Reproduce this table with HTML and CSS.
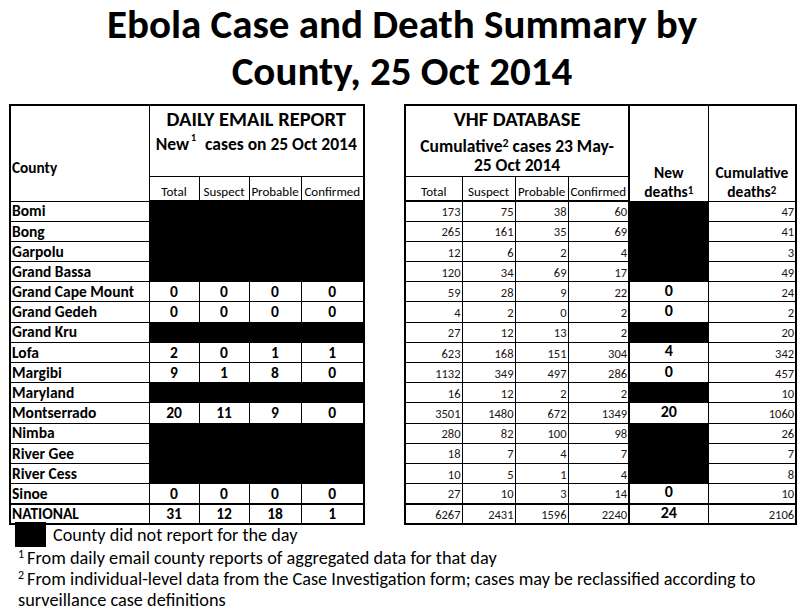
FILE: index.html
```html
<!DOCTYPE html>
<html>
<head>
<meta charset="utf-8">
<link rel="stylesheet" href="styles.css">
</head>
<body>
<h1 class="title">Ebola Case and Death Summary by<br>County, 25 Oct 2014</h1>
<div class="tables">
  <table class="daily">
    <colgroup><col class="c-county"><col class="c-a"><col class="c-b"><col class="c-c"><col class="c-d"></colgroup>
    <thead>
      <tr class="h1">
        <th rowspan="2" class="county-h">County</th>
        <th colspan="4" class="group"><div class="big">DAILY EMAIL REPORT</div><div class="sub">New<sup class="s1">1</sup> cases on 25 Oct 2014</div></th>
      </tr>
      <tr class="h2">
        <th class="sh">Total</th><th class="sh">Suspect</th><th class="sh">Probable</th><th class="sh">Confirmed</th>
      </tr>
    </thead>
    <tbody>
      <tr><td class="name">Bomi</td><td colspan="4" class="nr"></td></tr>
      <tr><td class="name">Bong</td><td colspan="4" class="nr"></td></tr>
      <tr><td class="name">Garpolu</td><td colspan="4" class="nr"></td></tr>
      <tr><td class="name">Grand Bassa</td><td colspan="4" class="nr"></td></tr>
      <tr><td class="name">Grand Cape Mount</td><td class="v">0</td><td class="v">0</td><td class="v">0</td><td class="v">0</td></tr>
      <tr><td class="name">Grand Gedeh</td><td class="v">0</td><td class="v">0</td><td class="v">0</td><td class="v">0</td></tr>
      <tr><td class="name">Grand Kru</td><td colspan="4" class="nr"></td></tr>
      <tr><td class="name">Lofa</td><td class="v">2</td><td class="v">0</td><td class="v">1</td><td class="v">1</td></tr>
      <tr><td class="name">Margibi</td><td class="v">9</td><td class="v">1</td><td class="v">8</td><td class="v">0</td></tr>
      <tr><td class="name">Maryland</td><td colspan="4" class="nr"></td></tr>
      <tr><td class="name">Montserrado</td><td class="v">20</td><td class="v">11</td><td class="v">9</td><td class="v">0</td></tr>
      <tr><td class="name">Nimba</td><td colspan="4" class="nr"></td></tr>
      <tr><td class="name">River Gee</td><td colspan="4" class="nr"></td></tr>
      <tr><td class="name">River Cess</td><td colspan="4" class="nr"></td></tr>
      <tr><td class="name">Sinoe</td><td class="v">0</td><td class="v">0</td><td class="v">0</td><td class="v">0</td></tr>
      <tr class="nat"><td class="name">NATIONAL</td><td class="v">31</td><td class="v">12</td><td class="v">18</td><td class="v">1</td></tr>
    </tbody>
  </table>

  <table class="vhf">
    <colgroup><col class="r-a"><col class="r-b"><col class="r-c"><col class="r-d"><col class="r-e"><col class="r-f"></colgroup>
    <thead>
      <tr class="h1">
        <th colspan="4" class="group"><div class="big">VHF DATABASE</div><div class="sub sub-r"><div>Cumulative<sup class="s2">2</sup> cases 23 May-</div><div>25 Oct 2014</div></div></th>
        <th rowspan="2" class="dh nd"><div>New</div><div>deaths<sup class="s3">1</sup></div></th>
        <th rowspan="2" class="dh"><div>Cumulative</div><div>deaths<sup class="s3">2</sup></div></th>
      </tr>
      <tr class="h2">
        <th class="sh">Total</th><th class="sh">Suspect</th><th class="sh">Probable</th><th class="sh">Confirmed</th>
      </tr>
    </thead>
    <tbody>
      <tr><td>173</td><td>75</td><td>38</td><td>60</td><td class="nd nr"></td><td>47</td></tr>
      <tr><td>265</td><td>161</td><td>35</td><td>69</td><td class="nd nr"></td><td>41</td></tr>
      <tr><td>12</td><td>6</td><td>2</td><td>4</td><td class="nd nr"></td><td>3</td></tr>
      <tr><td>120</td><td>34</td><td>69</td><td>17</td><td class="nd nr"></td><td>49</td></tr>
      <tr><td>59</td><td>28</td><td>9</td><td>22</td><td class="nd dv">0</td><td>24</td></tr>
      <tr><td>4</td><td>2</td><td>0</td><td>2</td><td class="nd dv">0</td><td>2</td></tr>
      <tr><td>27</td><td>12</td><td>13</td><td>2</td><td class="nd nr"></td><td>20</td></tr>
      <tr><td>623</td><td>168</td><td>151</td><td>304</td><td class="nd dv">4</td><td>342</td></tr>
      <tr><td>1132</td><td>349</td><td>497</td><td>286</td><td class="nd dv">0</td><td>457</td></tr>
      <tr><td>16</td><td>12</td><td>2</td><td>2</td><td class="nd nr"></td><td>10</td></tr>
      <tr><td>3501</td><td>1480</td><td>672</td><td>1349</td><td class="nd dv">20</td><td>1060</td></tr>
      <tr><td>280</td><td>82</td><td>100</td><td>98</td><td class="nd nr"></td><td>26</td></tr>
      <tr><td>18</td><td>7</td><td>4</td><td>7</td><td class="nd nr"></td><td>7</td></tr>
      <tr><td>10</td><td>5</td><td>1</td><td>4</td><td class="nd nr"></td><td>8</td></tr>
      <tr><td>27</td><td>10</td><td>3</td><td>14</td><td class="nd dv">0</td><td>10</td></tr>
      <tr class="nat"><td>6267</td><td>2431</td><td>1596</td><td>2240</td><td class="nd dv">24</td><td>2106</td></tr>
    </tbody>
  </table>
</div>
<div class="legend"><span class="swatch"></span><span class="legend-text">County did not report for the day</span></div>
<div class="notes">
  <p class="note"><sup class="fn">1</sup>From daily email county reports of aggregated data for that day</p>
  <p class="note"><sup class="fn">2</sup>From individual-level data from the Case Investigation form; cases may be reclassified according to<br>surveillance case definitions</p>
</div>
</body>
</html>
```

FILE: styles.css
```css
* { box-sizing: border-box; }
body {
  margin: 0;
  font-family: Carlito, Lato, "Liberation Sans", sans-serif;
  color: #000;
  background: #fff;
}
.title {
  margin: 0;
  padding-top: 1px;
  text-align: center;
  font-size: 41px;
  line-height: 47px;
  font-weight: 700;
}
.tables {
  display: flex;
  align-items: flex-start;
  gap: 39px;
  padding-left: 9px;
  margin-top: 9px;
}
table {
  border-collapse: collapse;
  table-layout: fixed;
  border: 2px solid #000;
}
th, td {
  border: 1px solid #000;
  padding: 0;
  line-height: 1;
}
.daily { width: 355px; }
.c-county { width: 139px; }
.c-a { width: 50px; }
.c-b { width: 50px; }
.c-c { width: 52px; }
.c-d { width: 63px; }
.vhf { width: 392px; }
.r-a { width: 57px; }
.r-b { width: 53px; }
.r-c { width: 53px; }
.r-d { width: 61px; }
.r-e { width: 79px; }
.r-f { width: 88px; }

.h1 th { height: 71px; }
.h2 th { height: 25px; }
thead tr.h2 th { border-bottom: 2px solid #000; }
tbody td { height: 20.2px; }
tr.nat td { border-top: 2px solid #000; }

.county-h {
  text-align: left;
  vertical-align: middle;
  padding: 28px 0 0 1px;
  font-size: 15.3px;
  font-weight: 700;
}
.group {
  vertical-align: top;
  font-weight: 700;
  text-align: center;
}
.big {
  font-size: 20.5px;
  line-height: 20px;
  padding-top: 3px;
}
.sub {
  font-size: 17.5px;
  line-height: 21px;
  padding-top: 5px;
}
.sub-r {
  line-height: 19px;
  padding-top: 8px;
}
.s1 {
  position: relative;
  top: -9px;
  font-size: 10px;
  vertical-align: baseline;
  line-height: 0;
  margin: 0 5px 0 2px;
}
.s2 {
  position: relative;
  top: -5px;
  font-size: 12px;
  vertical-align: baseline;
  line-height: 0;
}
.s3 {
  position: relative;
  top: -3px;
  font-size: 11px;
  vertical-align: baseline;
  line-height: 0;
}
.sh {
  font-size: 13px;
  font-weight: 400;
  vertical-align: bottom;
  padding-bottom: 2px;
  white-space: nowrap;
}
.dh {
  vertical-align: bottom;
  font-size: 15.5px;
  font-weight: 700;
  line-height: 19px;
  padding-bottom: 0;
}
.name {
  font-size: 15.5px;
  font-weight: 700;
  padding-left: 1px;
  white-space: nowrap;
}
.daily .v {
  text-align: center;
  font-size: 15.5px;
  font-weight: 700;
}
.nr { background: #000; }
.vhf tbody td {
  text-align: right;
  vertical-align: bottom;
  font-size: 12.5px;
  padding: 0 1px 2px 0;
  color: #1c1414;
}
.vhf .nd { border-left: 2px solid #000; }
.vhf tbody td.dv {
  text-align: center;
  vertical-align: middle;
  font-size: 16px;
  font-weight: 700;
  color: #000;
  padding: 0 0 2px 0;
}
.legend {
  display: flex;
  align-items: center;
  gap: 7px;
  margin-top: -3px;
  padding-left: 15px;
}
.swatch {
  width: 31px;
  height: 25px;
  background: #000;
}
.legend-text {
  font-size: 18.2px;
  line-height: 20px;
}
.notes { padding-left: 18px; padding-top: 1px; }
.note {
  margin: 0;
  font-size: 18.3px;
  line-height: 21px;
}
.fn {
  position: relative;
  top: -6px;
  font-size: 12px;
  vertical-align: baseline;
  line-height: 0;
  margin-right: 3px;
}
```
